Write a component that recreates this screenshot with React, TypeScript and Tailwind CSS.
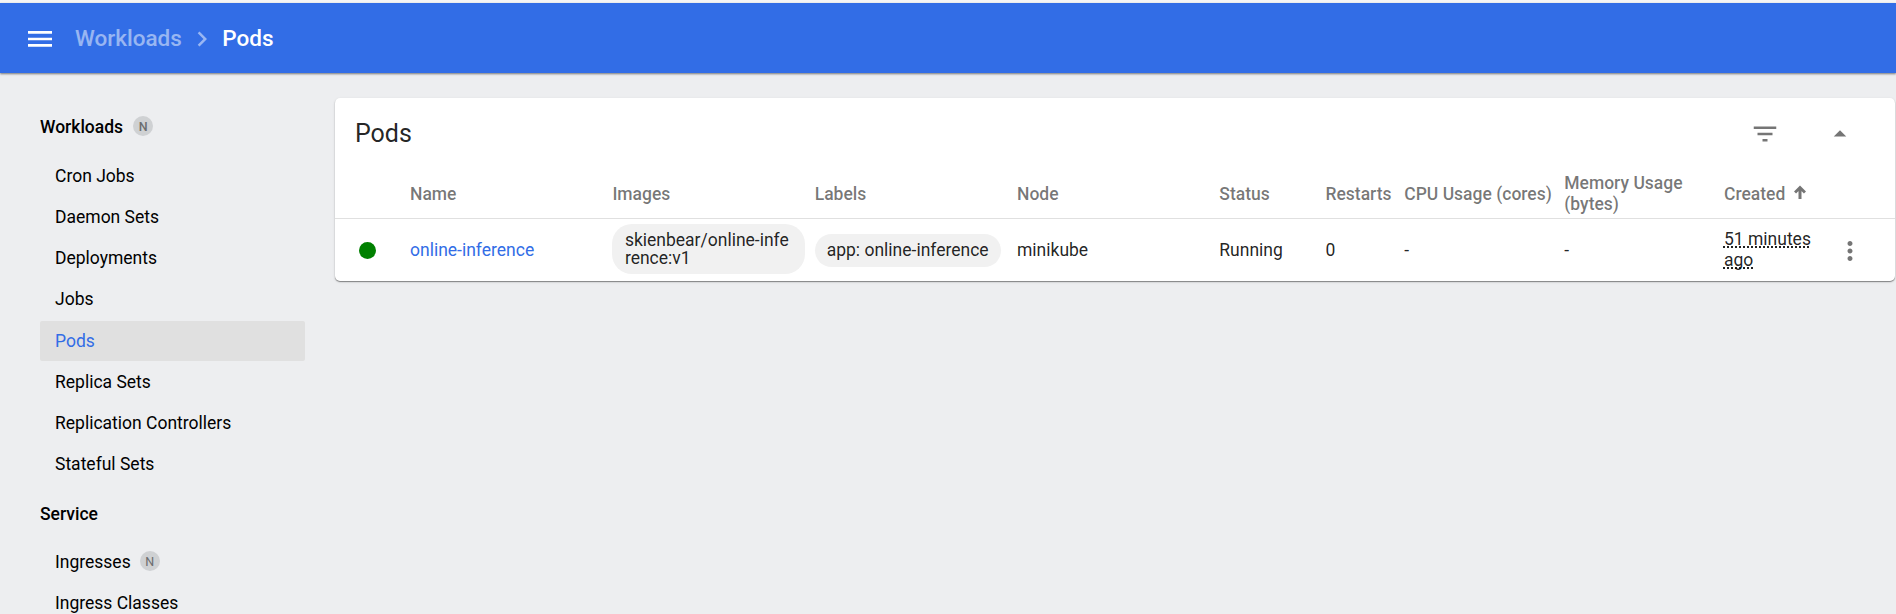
import type { ReactNode } from 'react';

const columns =
  'grid grid-cols-[75px_202.4px_202.3px_202.3px_202.3px_106.2px_78.8px_160px_159.7px_1fr] items-center';

function Icon({ d, className }: { d: string; className?: string }) {
  return (
    <svg viewBox="0 0 24 24" fill="currentColor" className={className ?? 'size-[30px]'}>
      <path d={d} />
    </svg>
  );
}

function Badge() {
  return (
    <span className="mb-0.5 flex size-5 items-center justify-center rounded-full bg-[#cfd1d3] text-[12.5px] text-[#6c6d6e]">
      N
    </span>
  );
}

function Heading({ children, badge }: { children: ReactNode; badge?: boolean }) {
  return (
    <div className="flex h-10 items-center gap-2.5 font-medium">
      {children}
      {badge && <Badge />}
    </div>
  );
}

function Item({ label, active, badge }: { label: string; active?: boolean; badge?: boolean }) {
  return (
    <a
      className={
        active
          ? 'flex h-10 w-[265px] items-center gap-[9px] rounded-xs bg-[#e0e0e0] pl-[15px] text-[#326de6]'
          : 'flex h-10 w-[265px] items-center gap-[9px] pl-[15px]'
      }
    >
      {label}
      {badge && <Badge />}
    </a>
  );
}

const workloads = [
  'Cron Jobs',
  'Daemon Sets',
  'Deployments',
  'Jobs',
  'Pods',
  'Replica Sets',
  'Replication Controllers',
  'Stateful Sets',
];

export default function App() {
  return (
    <div className="flex h-[614px] flex-col overflow-hidden bg-[#edeef0] font-[Roboto,sans-serif] text-[17.5px] leading-[21px] text-black">
      <div className="h-[3px] shrink-0 bg-[#f5f5f5]" />
      <header className="z-10 flex h-[70px] shrink-0 items-center bg-[#326de6] pl-6 text-[22.5px] font-medium text-white shadow-[0_1px_2px_rgba(0,0,0,0.5)]">
        <svg viewBox="0 0 32 32" fill="currentColor" className="mt-0.5 size-8">
          <path d="M4 8h24v2.7H4zM4 14.7h24v2.6H4zM4 21h24v2.7H4z" />
        </svg>
        <span className="ml-[19px] text-white/50">Workloads</span>
        <Icon d="M10 6L8.59 7.41 13.17 12l-4.58 4.59L10 18l6-6z" className="mt-px ml-[5px] size-[30px] text-white/50" />
        <span className="ml-[5.5px]">Pods</span>
      </header>

      <div className="flex min-h-0 flex-1">
        <nav className="w-[335px] shrink-0 pt-[34px] pl-10">
          <Heading badge>Workloads</Heading>
          <div className="mt-[9px] flex flex-col gap-[1.25px]">
            {workloads.map((w) => (
              <Item key={w} label={w} active={w === 'Pods'} />
            ))}
          </div>
          <div className="mt-2.5">
            <Heading>Service</Heading>
          </div>
          <div className="mt-[7.5px] flex flex-col gap-[1.25px]">
            <Item label="Ingresses" badge />
            <Item label="Ingress Classes" />
          </div>
        </nav>

        <main className="flex-1 pt-[25px] pr-px">
          <section className="h-[183px] rounded-[5px] bg-white text-black/87 shadow-[0_1px_1px_rgba(0,0,0,0.4),0_1px_3px_rgba(0,0,0,0.12)]">
            <div className="flex h-[72px] items-center pl-5 text-black/54">
              <h1 className="flex-1 pb-0.5 text-[25px] text-black/87">Pods</h1>
              <Icon d="M10 18h4v-2h-4v2zM3 6v2h18V6H3zm3 7h12v-2H6v2z" />
              <Icon d="M7 14l5-5 5 5z" className="mr-10 ml-[45px] size-[30px]" />
            </div>

            <div className={`${columns} h-[49px] border-b border-black/12 font-medium text-black/54`}>
              <span />
              <span>Name</span>
              <span>Images</span>
              <span>Labels</span>
              <span>Node</span>
              <span>Status</span>
              <span>Restarts</span>
              <span className="whitespace-nowrap">CPU Usage (cores)</span>
              <span>
                Memory Usage
                <br />
                (bytes)
              </span>
              <span className="flex items-center">
                Created
                <svg viewBox="0 0 12 14" className="mb-1 ml-[9px] h-3.5 w-3" fill="none" stroke="currentColor" strokeWidth="3">
                  <path d="M6 14V3M1 7.5l5-5 5 5" />
                </svg>
              </span>
            </div>

            <div className={`${columns} h-[62px]`}>
              <span className="ml-6 size-[17px] rounded-full bg-[#008000]" />
              <a className="text-[#326de6]">online-inference</a>
              <span className="pb-[2px]">
                <span className="flex h-[50px] w-[193px] items-center rounded-[20px] bg-[#f1f1f1] pt-px pl-[12.5px] leading-[17.5px]">
                  skienbear/online-infe
                  <br />
                  rence:v1
                </span>
              </span>
              <span>
                <span className="inline-flex h-[33px] items-center rounded-full bg-[#f1f1f1] px-3 align-middle whitespace-nowrap">
                  app: online-inference
                </span>
              </span>
              <span>minikube</span>
              <span>Running</span>
              <span>0</span>
              <span>-</span>
              <span>-</span>
              <span className="flex items-center">
                <span className="w-[100px]">
                  <span className="underline decoration-dotted decoration-2 underline-offset-1 [text-decoration-skip-ink:none]">
                    51 minutes ago
                  </span>
                </span>
                <Icon
                  d="M12 8c1.1 0 2-.9 2-2s-.9-2-2-2-2 .9-2 2 .9 2 2 2zm0 2c-1.1 0-2 .9-2 2s.9 2 2 2 2-.9 2-2-.9-2-2-2zm0 6c-1.1 0-2 .9-2 2s.9 2 2 2 2-.9 2-2-.9-2-2-2z"
                  className="mt-0.5 ml-[11.5px] size-[30px] text-black/54"
                />
              </span>
            </div>
          </section>
        </main>
      </div>
    </div>
  );
}
